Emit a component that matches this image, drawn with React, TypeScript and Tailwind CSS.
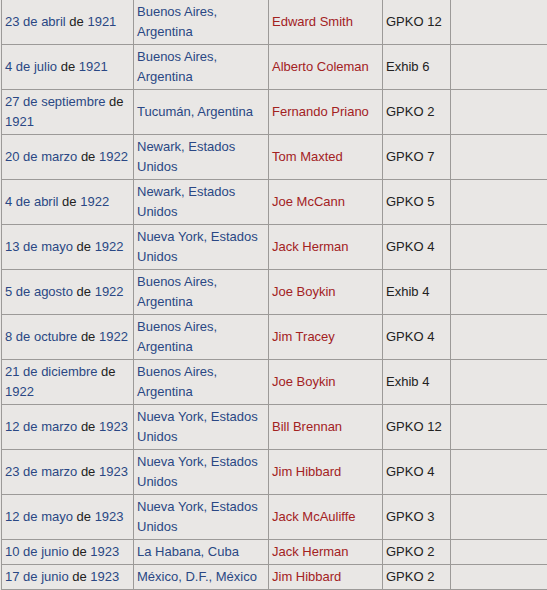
import React from 'react';

type Fight = {
  day: string;
  year: string;
  place: string;
  rival: string;
  result: string;
};

const FIGHTS: Fight[] = [
  { day: '23 de abril', year: '1921', place: 'Buenos Aires, Argentina', rival: 'Edward Smith', result: 'GPKO 12' },
  { day: '4 de julio', year: '1921', place: 'Buenos Aires, Argentina', rival: 'Alberto Coleman', result: 'Exhib 6' },
  { day: '27 de septiembre', year: '1921', place: 'Tucumán, Argentina', rival: 'Fernando Priano', result: 'GPKO 2' },
  { day: '20 de marzo', year: '1922', place: 'Newark, Estados Unidos', rival: 'Tom Maxted', result: 'GPKO 7' },
  { day: '4 de abril', year: '1922', place: 'Newark, Estados Unidos', rival: 'Joe McCann', result: 'GPKO 5' },
  { day: '13 de mayo', year: '1922', place: 'Nueva York, Estados Unidos', rival: 'Jack Herman', result: 'GPKO 4' },
  { day: '5 de agosto', year: '1922', place: 'Buenos Aires, Argentina', rival: 'Joe Boykin', result: 'Exhib 4' },
  { day: '8 de octubre', year: '1922', place: 'Buenos Aires, Argentina', rival: 'Jim Tracey', result: 'GPKO 4' },
  { day: '21 de diciembre', year: '1922', place: 'Buenos Aires, Argentina', rival: 'Joe Boykin', result: 'Exhib 4' },
  { day: '12 de marzo', year: '1923', place: 'Nueva York, Estados Unidos', rival: 'Bill Brennan', result: 'GPKO 12' },
  { day: '23 de marzo', year: '1923', place: 'Nueva York, Estados Unidos', rival: 'Jim Hibbard', result: 'GPKO 4' },
  { day: '12 de mayo', year: '1923', place: 'Nueva York, Estados Unidos', rival: 'Jack McAuliffe', result: 'GPKO 3' },
  { day: '10 de junio', year: '1923', place: 'La Habana, Cuba', rival: 'Jack Herman', result: 'GPKO 2' },
  { day: '17 de junio', year: '1923', place: 'México, D.F., México', rival: 'Jim Hibbard', result: 'GPKO 2' },
];

const cell = 'border border-[#9c9a98] px-[3px] py-[2px] align-middle';

const App: React.FC = () => {
  return (
    <div className="w-[547px] h-[590px] overflow-hidden bg-[#e9e7e5]">
      <table
        className="ml-px -mt-px border-collapse table-fixed text-[13px] leading-5 text-[#222]"
        style={{ fontFamily: '"Liberation Sans", Arial, sans-serif', width: 620 }}
      >
        <colgroup>
          <col className="w-[132px]" />
          <col className="w-[135px]" />
          <col className="w-[114px]" />
          <col className="w-[68px]" />
          <col className="w-[171px]" />
        </colgroup>
        <tbody>
          {FIGHTS.map((f, i) => (
            <tr key={i}>
              <td className={cell}>
                <span className="text-[#2a4784]">{f.day}</span> de{' '}
                <span className="text-[#2a4784]">{f.year}</span>
              </td>
              <td className={`${cell} text-[#2a4784]`}>{f.place}</td>
              <td className={`${cell} text-[#a3221f]`}>{f.rival}</td>
              <td className={cell}>{f.result}</td>
              <td className={cell}></td>
            </tr>
          ))}
        </tbody>
      </table>
    </div>
  );
};

export default App;
